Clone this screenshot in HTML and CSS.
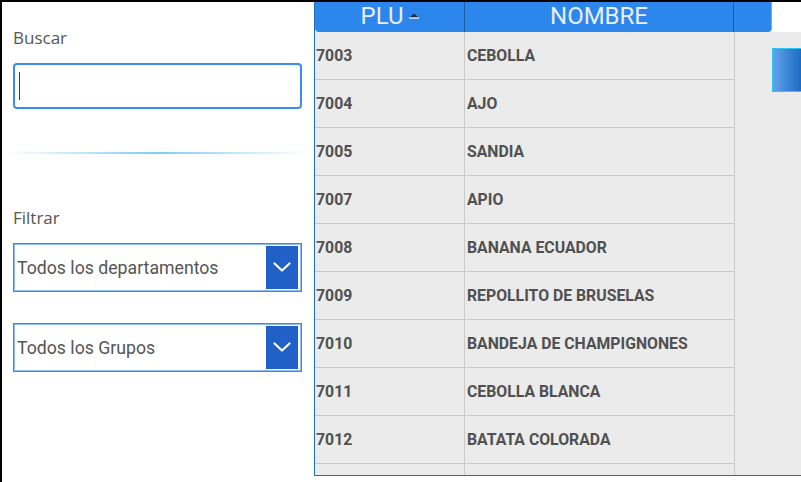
FILE: index.html
```html
<!DOCTYPE html>
<html lang="es">
<head>
<meta charset="utf-8">
<title>PLU</title>
<link rel="stylesheet" href="styles.css">
</head>
<body>
<div class="screen">
  <aside class="side">
    <div class="label">Buscar</div>
    <div class="search"><span class="caret"></span></div>
    <div class="sep"></div>
    <div class="label label-filter">Filtrar</div>
    <div class="select">
      <span class="select-text">Todos los departamentos</span>
      <span class="select-btn"><svg width="18" height="10" viewBox="0 0 18 10"><polyline points="1.5,1.5 9,8.5 16.5,1.5" fill="none" stroke="#ffffff" stroke-width="2.2" stroke-linecap="round" stroke-linejoin="round"/></svg></span>
    </div>
    <div class="select select-2">
      <span class="select-text">Todos los Grupos</span>
      <span class="select-btn"><svg width="18" height="10" viewBox="0 0 18 10"><polyline points="1.5,1.5 9,8.5 16.5,1.5" fill="none" stroke="#ffffff" stroke-width="2.2" stroke-linecap="round" stroke-linejoin="round"/></svg></span>
    </div>
  </aside>
  <main class="grid">
    <div class="thead">
      <div class="th th-plu">PLU<svg class="sort" width="10" height="6" viewBox="0 0 10 6"><polygon points="1,4 5,0.5 9,4" fill="#1b2d4a"/><rect x="0" y="4.5" width="10" height="1.2" fill="#f2f6fc"/></svg></div>
      <div class="th th-name">NOMBRE</div>
      <div class="th th-end"></div>
    </div>
    <div class="tbody">
      <div class="rows">
        <div class="row"><div class="td td-plu">7003</div><div class="td td-name">CEBOLLA</div></div>
        <div class="row"><div class="td td-plu">7004</div><div class="td td-name">AJO</div></div>
        <div class="row"><div class="td td-plu">7005</div><div class="td td-name">SANDIA</div></div>
        <div class="row"><div class="td td-plu">7007</div><div class="td td-name">APIO</div></div>
        <div class="row"><div class="td td-plu">7008</div><div class="td td-name">BANANA ECUADOR</div></div>
        <div class="row"><div class="td td-plu">7009</div><div class="td td-name">REPOLLITO DE BRUSELAS</div></div>
        <div class="row"><div class="td td-plu">7010</div><div class="td td-name">BANDEJA DE CHAMPIGNONES</div></div>
        <div class="row"><div class="td td-plu">7011</div><div class="td td-name">CEBOLLA BLANCA</div></div>
        <div class="row"><div class="td td-plu">7012</div><div class="td td-name">BATATA COLORADA</div></div>
        <div class="row"><div class="td td-plu"></div><div class="td td-name"></div></div>
      </div>
      <div class="thumb"></div>
    </div>
  </main>
</div>
</body>
</html>
```
FILE: styles.css
```css
html, body {
  margin: 0;
  padding: 0;
  background: #ffffff;
}

.screen {
  width: 801px;
  height: 482px;
  box-sizing: border-box;
  border-top: 2px solid #000000;
  border-left: 2px solid #000000;
  display: flex;
  align-items: flex-start;
  overflow: hidden;
  background: #ffffff;
}

/* ---------- left panel ---------- */
.side {
  width: 312px;
  flex: none;
  box-sizing: border-box;
  padding-left: 11px;
  display: flex;
  flex-direction: column;
}

.label {
  font-family: "Open Sans", "DejaVu Sans", sans-serif;
  font-size: 17px;
  line-height: 20px;
  color: #555555;
  margin-top: 26px;
}

.search {
  margin-top: 15px;
  width: 289px;
  height: 46px;
  box-sizing: border-box;
  border: 2px solid #3c8cef;
  border-radius: 4px;
  display: flex;
  align-items: center;
  padding-left: 4px;
}

.caret {
  width: 1px;
  height: 28px;
  background: #3a3a3a;
}

.sep {
  margin-top: 43px;
  margin-left: -8px;
  width: 305px;
  height: 2px;
  background: linear-gradient(to right, rgba(128, 208, 240, 0) 0%, #a6ddf4 35%, #7ccdf0 50%, #a6ddf4 65%, rgba(128, 208, 240, 0) 100%);
}

.label-filter {
  margin-top: 54px;
}

.select {
  margin-top: 15px;
  width: 289px;
  height: 49px;
  box-sizing: border-box;
  border: 1px solid #3f88e6;
  box-shadow: inset 0 0 0 1px #8dbbf2;
  padding: 2px 3px 2px 1px;
  display: flex;
  align-items: stretch;
}

.select-2 {
  margin-top: 31px;
}

.select-text {
  flex: 1;
  display: flex;
  align-items: center;
  padding-left: 2px;
  font-family: Roboto, "Liberation Sans", sans-serif;
  font-size: 17.7px;
  color: #555555;
  white-space: nowrap;
}

.select-btn {
  width: 32px;
  flex: none;
  background: #2160c6;
  display: flex;
  align-items: center;
  justify-content: center;
  padding-bottom: 2px;
  box-sizing: border-box;
}

/* ---------- grid ---------- */
.grid {
  flex: 1;
  height: 474px;
  box-sizing: border-box;
  border-left: 1px solid #1a6fb5;
  border-bottom: 1px solid #1a6fb5;
  display: flex;
  flex-direction: column;
}

.thead {
  width: 457px;
  height: 30px;
  flex: none;
  box-sizing: border-box;
  display: flex;
  background: #2d86ec;
  border-right: 1px solid #3cc4f2;
  border-radius: 0 0 4px 4px;
}

.th {
  box-sizing: border-box;
  display: flex;
  justify-content: center;
  align-items: flex-start;
  font-family: Roboto, "Liberation Sans", sans-serif;
  font-size: 24px;
  line-height: 28px;
  color: #e8eff9;
}

.th-plu {
  width: 150px;
  border-right: 1px solid #1b5ea6;
}

.sort {
  margin: 11px 0 0 5px;
}

.th-name {
  width: 269px;
  border-right: 1px solid #1b5ea6;
}

.th-end {
  flex: 1;
}

.tbody {
  flex: 1;
  display: flex;
  background: #eaebea;
  overflow: hidden;
  position: relative;
}

.rows {
  width: 420px;
  flex: none;
}

.row {
  display: flex;
  height: 48px;
  box-sizing: border-box;
  border-bottom: 1px solid #c9c9c9;
}

.td {
  box-sizing: border-box;
  display: flex;
  align-items: center;
  border-right: 1px solid #c9c9c9;
  font-family: Roboto, "Liberation Sans", sans-serif;
  font-weight: 700;
  font-size: 15.8px;
  color: #505050;
  white-space: nowrap;
}

.td-plu {
  width: 150px;
  padding-left: 1px;
}

.td-name {
  width: 270px;
  padding-left: 2px;
}

.thumb {
  position: absolute;
  top: 16px;
  right: 0;
  width: 29px;
  height: 44px;
  box-sizing: border-box;
  border: 1px solid #2ec6f0;
  border-right: none;
  background: linear-gradient(to right, #60a4ec, #1d6bc2);
}
```
